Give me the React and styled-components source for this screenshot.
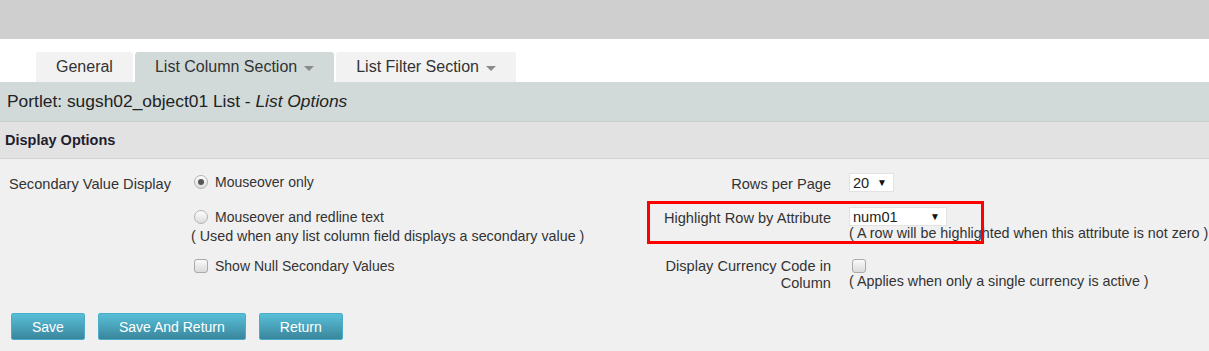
import React from "react";
import styled, { createGlobalStyle } from "styled-components";

const GlobalStyle = createGlobalStyle`
  html, body {
    margin: 0;
    padding: 0;
    background: #f0f0f0;
  }
  body {
    font-family: "Liberation Sans", Arial, sans-serif;
    color: #333;
  }
`;

const App = () => {
    return (
        <Page>
            <GlobalStyle />
            <TopBar />
            <TabStrip>
                <Tab>General</Tab>
                <Tab active>List Column Section<Caret /></Tab>
                <Tab>List Filter Section<Caret /></Tab>
            </TabStrip>
            <TitleBar>Portlet: sugsh02_object01 List - <em>List Options</em></TitleBar>
            <SectionHeader>Display Options</SectionHeader>
            <Body>
                <Columns>
                    <LeftPane>
                        <LeftLabel>Secondary Value Display</LeftLabel>
                        <OptionStack>
                            <Option>
                                <Radio checked />
                                Mouseover only
                            </Option>
                            <Option gap="17px">
                                <Radio />
                                Mouseover and redline text
                            </Option>
                            <Note>( Used when any list column field displays a secondary value )</Note>
                            <Option gap="12px">
                                <Checkbox />
                                Show Null Secondary Values
                            </Option>
                        </OptionStack>
                    </LeftPane>
                    <RightPane>
                        <RightLabel top="2px">Rows per Page</RightLabel>
                        <Field>
                            <SelectBox width="45px">20<Arrow>▼</Arrow></SelectBox>
                        </Field>
                        <RightLabel top="16px">Highlight Row by Attribute</RightLabel>
                        <Field top="14px">
                            <SelectBox width="98px">num01<Arrow>▼</Arrow></SelectBox>
                            <Note shift="-2px">( A row will be highlighted when this attribute is not zero )</Note>
                        </Field>
                        <RightLabel top="16px" lines>Display Currency Code in<br />Column</RightLabel>
                        <Field top="17px">
                            <Checkbox inline />
                            <Note shift="-1px">( Applies when only a single currency is active )</Note>
                        </Field>
                    </RightPane>
                </Columns>
                <ButtonBar>
                    <Button>Save</Button>
                    <Button>Save And Return</Button>
                    <Button>Return</Button>
                </ButtonBar>
            </Body>
            <Highlight />
        </Page>
    );
}

export default App;

const Page = styled.div`
  position: relative;
  width: 1209px;
  height: 351px;
  overflow: hidden;
  background: #f0f0f0;
`;

const TopBar = styled.div`
  height: 39px;
  background: #cfcfcf;
`;

const TabStrip = styled.div`
  height: 43px;
  background: #fff;
  display: flex;
  align-items: flex-end;
  gap: 2px;
  padding-left: 36px;
  box-sizing: border-box;
`;

const Tab = styled.div`
  height: 30px;
  display: flex;
  align-items: center;
  padding: 0 20px;
  font-size: 16px;
  color: #333;
  border-radius: 3px 3px 0 0;
  background: ${props => props.active ? "#d1dad9" : "#f2f2f2"};
`;

const Caret = styled.span`
  display: inline-block;
  margin-left: 7px;
  margin-top: 2px;
  border-left: 5px solid transparent;
  border-right: 5px solid transparent;
  border-top: 5px solid #8a8a8a;
`;

const TitleBar = styled.div`
  height: 40px;
  box-sizing: border-box;
  background: #d1dad9;
  border-bottom: 1px solid #c5cdcc;
  padding: 0 7px;
  display: flex;
  align-items: center;
  font-size: 17.4px;
  color: #222;
  white-space: pre;

  em {
    font-style: italic;
  }
`;

const SectionHeader = styled.div`
  height: 37px;
  box-sizing: border-box;
  background: #e2e2e2;
  border-bottom: 1px solid #d2d2d2;
  padding: 0 5px;
  display: flex;
  align-items: center;
  font-size: 14.5px;
  font-weight: bold;
  color: #1e1e2e;
`;

const Body = styled.div`
  padding: 14px 0 0 9px;
  font-size: 14.6px;
  line-height: 18px;
`;

const Columns = styled.div`
  display: flex;
  white-space: nowrap;
`;

const LeftPane = styled.div`
  flex: none;
  width: 622px;
  display: grid;
  grid-template-columns: 182px 1fr;
  align-items: start;
`;

const LeftLabel = styled.div`
  padding-top: 2px;
`;

const OptionStack = styled.div`
  display: flex;
  flex-direction: column;
`;

const Option = styled.label`
  display: flex;
  align-items: center;
  gap: 7px;
  padding-left: 3px;
  font-size: 14px;
  margin-top: ${props => props.gap || "0"};
`;

const Radio = styled.span`
  width: 14px;
  height: 14px;
  box-sizing: border-box;
  border-radius: 50%;
  border: 1px solid #b3b3b3;
  background: linear-gradient(#fdfdfd, #dcdcdc);
  display: flex;
  align-items: center;
  justify-content: center;

  &::after {
    content: "";
    display: ${props => props.checked ? "block" : "none"};
    width: 6px;
    height: 6px;
    border-radius: 50%;
    background: #555;
  }
`;

const Checkbox = styled.span`
  display: block;
  width: 14px;
  height: 14px;
  box-sizing: border-box;
  border-radius: 3px;
  border: 1px solid #aaa;
  background: linear-gradient(#fafafa, #dadada);
  margin-left: ${props => props.inline ? "3px" : "0"};
`;

const Note = styled.div`
  margin-top: ${props => props.shift || "1px"};
  font-size: 14.3px;
  white-space: nowrap;
`;

const RightPane = styled.div`
  flex: none;
  display: grid;
  grid-template-columns: 200px max-content;
  column-gap: 18px;
  align-items: start;
`;

const RightLabel = styled.div`
  text-align: right;
  margin-top: ${props => props.top || "0"};
  line-height: ${props => props.lines ? "17px" : "18px"};
`;

const Field = styled.div`
  margin-top: ${props => props.top || "0"};
  display: flex;
  flex-direction: column;
  align-items: flex-start;
`;

const SelectBox = styled.div`
  width: ${props => props.width};
  height: 19px;
  box-sizing: border-box;
  background: #fff;
  border: 1px solid #e2e2e2;
  display: flex;
  align-items: center;
  justify-content: space-between;
  padding: 0 6px 0 3px;
  font-size: 14.6px;
  color: #222;
`;

const Arrow = styled.span`
  font-size: 10px;
  color: #111;
`;

const ButtonBar = styled.div`
  display: flex;
  gap: 13px;
  margin-top: 21px;
  padding-left: 2px;
`;

const Button = styled.button`
  height: 27px;
  padding: 0 20px;
  border: 1px solid #4aaecb;
  border-radius: 2px;
  background: linear-gradient(#58bfd8, #3a869c);
  color: #fff;
  font-family: "Liberation Sans", Arial, sans-serif;
  font-size: 14px;
  cursor: pointer;
`;

const Highlight = styled.div`
  position: absolute;
  left: 647px;
  top: 201px;
  width: 337px;
  height: 43px;
  box-sizing: border-box;
  border: 3px solid #f00;
  pointer-events: none;
`;
